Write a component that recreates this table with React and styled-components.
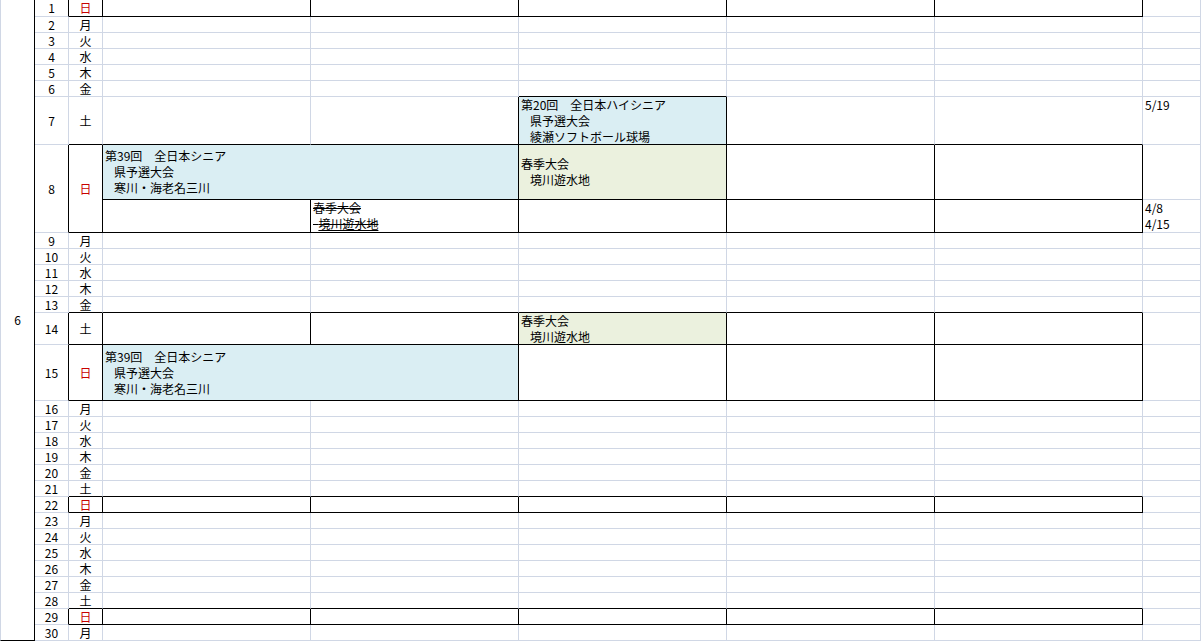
import React from "react";
import styled, { createGlobalStyle } from "styled-components";

const GRID = "#d0d7e5";
const BLUE = "#daeef3";
const GREEN = "#ebf1de";
const RED = "#c80000";

const Global = createGlobalStyle`
  html, body { margin: 0; padding: 0; background: #fff; }
  body { overflow: hidden; }
`;

const Sheet = styled.div`
  display: grid;
  width: 1201px;
  height: 641px;
  grid-template-columns: 35px 34px 34px repeat(5, 208px) 58px;
  grid-template-rows: 17px repeat(5, 16px) 48px 55px 33px repeat(5, 16px) 32px 56px repeat(15, 16px);
  font-family: "Noto Sans CJK JP", "Noto Sans", sans-serif;
  font-size: 12px;
  color: #000;
  overflow: hidden;
`;

const MonthCell = styled.div`
  grid-column: 1;
  grid-row: 1 / -1;
  box-sizing: border-box;
  border-left: 1px solid ${GRID};
  border-right: 1px solid #000;
  border-bottom: 1px solid #000;
  display: flex;
  align-items: center;
  justify-content: center;
  line-height: 16px;
`;

const Cell = styled.div`
  grid-column: auto / span ${(p) => p.$span};
  grid-row: auto / span ${(p) => p.$rspan};
  box-sizing: border-box;
  min-width: 0;
  border-right: 1px solid ${(p) => (p.$br ? "#000" : GRID)};
  border-bottom: 1px solid ${(p) => (p.$bb ? "#000" : GRID)};
  background: ${(p) => p.$bg || "#fff"};
  display: flex;
  flex-direction: column;
  justify-content: ${(p) => (p.$top ? "flex-start" : "center")};
  align-items: ${(p) => (p.$center ? "center" : "flex-start")};
  padding: 0 ${(p) => (p.$center ? 0 : 2)}px;
  white-space: pre;
`;

const Line = styled.div`
  line-height: 16px;
  height: 16px;
  padding-left: ${(p) => p.$indent || 0}px;
  text-decoration: ${(p) => (p.$strike ? "line-through" : "none")};
`;

const Under = styled.span`
  text-decoration: underline;
`;

const Weekday = styled.span`
  line-height: 16px;
  color: ${(p) => (p.$sun ? RED : "#000")};
`;

const Num = styled.span`
  line-height: 16px;
`;

const WEEK = ["日", "月", "火", "水", "木", "金", "土"];

const seniorLines = [
  { t: "第39回　全日本シニア" },
  { t: "県予選大会", indent: 9 },
  { t: "寒川・海老名三川", indent: 9 },
];
const hiSeniorLines = [
  { t: "第20回　全日本ハイシニア" },
  { t: "県予選大会", indent: 9 },
  { t: "綾瀬ソフトボール球場", indent: 9 },
];
const springLines = [{ t: "春季大会" }, { t: "境川遊水地", indent: 9 }];
const struckLines = [
  { t: "春季大会", strike: true },
  {
    t: (
      <>
        {"  "}
        <Under>境川遊水地</Under>
      </>
    ),
    strike: true,
  },
];

const BOX_ROWS = new Set([0, 7, 8, 14, 15, 22, 29]);
const boxed = (r, c) =>
  (BOX_ROWS.has(r) && c >= 2 && c <= 7) || (r === 6 && c === 5);

function buildCells() {
  const cells = [];
  const add = (r, c, o = {}) => cells.push({ r, c, span: 1, rspan: 1, ...o });
  const plain = (r, from, to) => {
    for (let c = from; c <= to; c++) add(r, c);
  };
  for (let d = 1; d <= 30; d++) {
    const r = d <= 7 ? d - 1 : d === 8 ? 7 : d;
    const wd = WEEK[(d - 1) % 7];
    const rspan = d === 8 ? 2 : 1;
    add(r, 1, { rspan, num: String(d) });
    add(r, 2, { rspan, wd });
    if (d === 7) {
      plain(r, 3, 4);
      add(r, 5, { bg: BLUE, lines: hiSeniorLines });
      plain(r, 6, 7);
      add(r, 8, { top: true, lines: [{ t: "5/19" }] });
    } else if (d === 8) {
      add(7, 3, { span: 2, bg: BLUE, lines: seniorLines });
      add(7, 5, { bg: GREEN, lines: springLines });
      plain(7, 6, 8);
      plain(8, 3, 3);
      add(8, 4, { lines: struckLines });
      plain(8, 5, 7);
      add(8, 8, { top: true, lines: [{ t: "4/8" }, { t: "4/15" }] });
    } else if (d === 14) {
      plain(r, 3, 4);
      add(r, 5, { bg: GREEN, lines: springLines });
      plain(r, 6, 8);
    } else if (d === 15) {
      add(r, 3, { span: 2, bg: BLUE, lines: seniorLines });
      plain(r, 5, 8);
    } else {
      plain(r, 3, 8);
    }
  }
  return cells.map((cell) => {
    const r1 = cell.r + cell.rspan - 1;
    const c1 = cell.c + cell.span - 1;
    let br = false;
    for (let r = cell.r; r <= r1; r++) if (boxed(r, c1) || boxed(r, c1 + 1)) br = true;
    let bb = false;
    for (let c = cell.c; c <= c1; c++) if (boxed(r1, c) || boxed(r1 + 1, c)) bb = true;
    return { ...cell, br, bb };
  });
}

const CELLS = buildCells();

export default function App() {
  return (
    <>
      <Global />
      <Sheet>
        <MonthCell>6</MonthCell>
        {CELLS.map((cell, i) => (
          <Cell
            key={i}
            $span={cell.span}
            $rspan={cell.rspan}
            $br={cell.br}
            $bb={cell.bb}
            $bg={cell.bg}
            $top={cell.top}
            $center={cell.num !== undefined || cell.wd !== undefined}
          >
            {cell.num !== undefined && <Num>{cell.num}</Num>}
            {cell.wd !== undefined && <Weekday $sun={cell.wd === "日"}>{cell.wd}</Weekday>}
            {cell.lines &&
              cell.lines.map((ln, j) => (
                <Line key={j} $indent={ln.indent} $strike={ln.strike}>
                  {ln.t}
                </Line>
              ))}
          </Cell>
        ))}
      </Sheet>
    </>
  );
}
